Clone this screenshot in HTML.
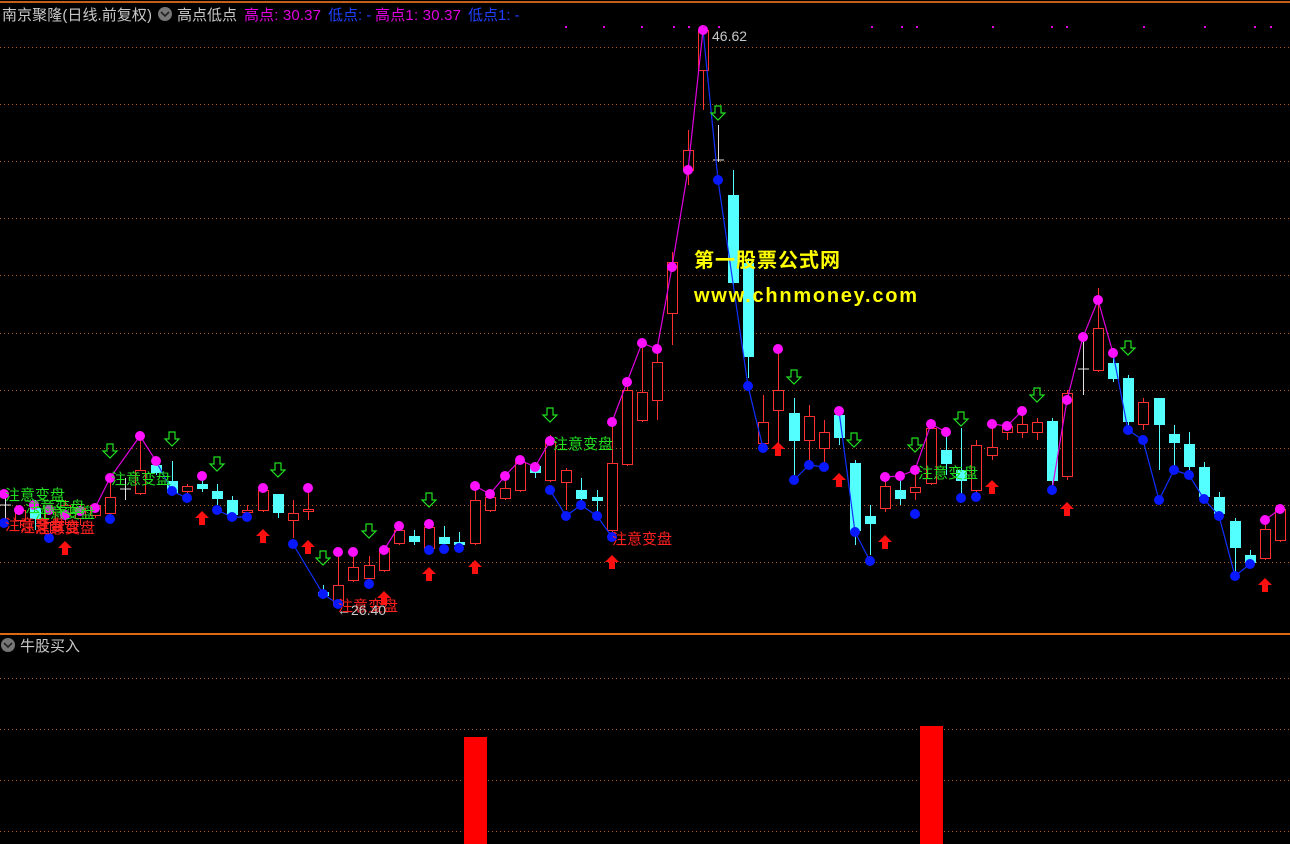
<!DOCTYPE html>
<html><head><meta charset="utf-8"><style>
html,body{margin:0;padding:0;background:#000;width:1290px;height:844px;overflow:hidden}
svg{display:block}
text{font-family:"Liberation Sans","Noto Sans CJK SC",sans-serif}
</style></head><body>
<svg id="s" width="1290" height="844" xmlns="http://www.w3.org/2000/svg">
<rect width="1290" height="844" fill="#000"/>
<line x1="0" y1="2" x2="1290" y2="2" stroke="#c0601c" stroke-width="2"/>
<g id="grid" stroke="#b85a10" stroke-width="1" stroke-dasharray="1,3"></g>
<line x1="0" y1="634" x2="1290" y2="634" stroke="#e06a10" stroke-width="2"/>
<text x="2" y="20" font-size="15" fill="#c8c8c8" textLength="150">南京聚隆(日线.前复权)</text>
<circle cx="165" cy="14" r="7" fill="#777"/><path d="M161 12 l4 4 l4 -4" stroke="#222" stroke-width="1.6" fill="none"/>
<text x="177" y="20" font-size="15" fill="#c8c8c8">高点低点</text>
<text x="244" y="20" font-size="15" fill="#e000e0" textLength="77">高点: 30.37</text>
<text x="328" y="20" font-size="15" fill="#2040ff">低点: -</text>
<text x="375" y="20" font-size="15" fill="#e000e0" textLength="86">高点1: 30.37</text>
<text x="468" y="20" font-size="15" fill="#2040ff">低点1: -</text>
<circle cx="8" cy="645" r="7" fill="#777"/><path d="M4 643 l4 4 l4 -4" stroke="#222" stroke-width="1.6" fill="none"/>
<text x="20" y="651" font-size="15" fill="#c8c8c8">牛股买入</text>
<rect x="464" y="737" width="23" height="107" fill="#ff0000"/>
<rect x="920" y="726" width="23" height="118" fill="#ff0000"/>
<g id="c"></g>
<text x="694" y="267" font-size="20" font-weight="bold" fill="#ffff00" textLength="146">第一股票公式网</text>
<text x="694" y="302" font-size="20" font-weight="bold" fill="#ffff00" textLength="223">www.chnmoney.com</text>
<text x="712" y="41" font-size="14" fill="#c8c8c8">46.62</text>
<text x="337" y="615" font-size="14" fill="#c8c8c8">←26.40</text>
</svg>
<script>
var NS="http://www.w3.org/2000/svg",g=document.getElementById('c'),gr=document.getElementById('grid');
function el(t,a,p){var e=document.createElementNS(NS,t);for(var k in a)e.setAttribute(k,a[k]);(p||g).appendChild(e);return e;}
[47,104,161,218,275,333,390,448,505,562,678,729,780,831].forEach(function(y){el('line',{x1:0,y1:y+.5,x2:1290,y2:y+.5},gr);});
var C=[[110,497,513,478,515,'r'],[125,489,491,478,500,'w'],[140,470,493,437,495,'r'],[156,465,472,458,475,'c'],[172,481,492,461,495,'c'],[187,486,491,484,495,'r'],[202,484,488,476,492,'c'],[217,491,498,484,505,'c'],[232,500,514,496,516,'c'],[247,510,512,505,516,'r'],[263,490,510,488,512,'r'],[278,494,512,494,518,'c'],[293,513,520,500,538,'r'],[308,509,511,490,520,'r'],[323,592,595,585,598,'c'],[338,585,605,552,608,'r'],[353,567,580,552,582,'r'],[369,565,578,556,585,'r'],[384,548,570,546,572,'r'],[399,530,543,526,545,'r'],[414,536,541,530,545,'c'],[429,527,548,524,550,'r'],[444,537,543,526,548,'c'],[459,542,544,532,548,'c'],[475,500,543,486,545,'r'],[490,497,510,492,512,'r'],[505,488,498,476,500,'r'],[520,462,490,458,492,'r'],[535,466,472,462,478,'c'],[550,441,480,435,482,'r'],[566,470,482,468,510,'r'],[581,490,498,478,505,'c'],[597,497,500,490,515,'c'],[612,463,530,422,532,'r'],[627,390,464,380,466,'r'],[642,392,420,343,422,'r'],[657,362,400,349,420,'r'],[672,262,313,252,345,'r'],[688,150,170,130,185,'r'],[703,30,70,28,110,'r'],[718,160,162,125,162,'w'],[733,195,282,170,285,'c'],[748,263,356,258,378,'c'],[763,422,443,395,448,'r'],[778,390,410,352,445,'r'],[794,413,440,398,475,'c'],[809,416,440,405,465,'r'],[824,432,448,420,467,'r'],[839,415,437,408,445,'c'],[855,463,530,460,545,'c'],[870,516,523,505,555,'c'],[885,486,508,478,512,'r'],[900,490,498,476,505,'c'],[915,487,492,470,500,'r'],[931,428,483,424,485,'r'],[946,450,463,432,475,'c'],[961,470,480,428,495,'c'],[976,445,490,440,495,'r'],[992,447,455,424,460,'r'],[1007,426,432,422,440,'r'],[1022,424,432,411,438,'r'],[1037,422,432,418,440,'r'],[1052,421,480,418,485,'c'],[1067,393,476,390,480,'r'],[1083,369,371,337,395,'w'],[1098,328,370,288,372,'r'],[1113,363,378,348,382,'c'],[1128,378,421,375,428,'c'],[1143,402,424,398,430,'r'],[1159,398,424,398,470,'c'],[1174,434,442,425,468,'c'],[1189,444,466,432,472,'c'],[1204,467,496,462,500,'c'],[1219,497,513,492,516,'c'],[1235,521,547,518,575,'c'],[1250,555,562,550,565,'c'],[1265,529,558,520,560,'r'],[1280,509,540,505,542,'r'],
[5,505,520,495,525,'w'],[20,510,520,505,528,'r'],[35,508,518,500,530,'c'],[50,512,522,505,535,'r'],[65,505,515,500,525,'r'],[80,508,518,505,525,'r'],[95,505,515,505,518,'r']];
C.forEach(function(c){var col=c[5]=='r'?'#ff3030':c[5]=='c'?'#54ffff':'#e0e0e0';
el('line',{x1:c[0]+.5,y1:c[3],x2:c[0]+.5,y2:c[4],stroke:col});
var h=Math.max(c[2]-c[1],1);
if(c[5]=='r')el('rect',{x:c[0]-4.5,y:c[1]+.5,width:10,height:h,fill:'#000',stroke:col});
else if(c[5]=='c')el('rect',{x:c[0]-5,y:c[1],width:11,height:h+1,fill:col});
else el('line',{x1:c[0]-5,y1:c[1],x2:c[0]+6,y2:c[1],stroke:col});});
function line(pts,col){el('polyline',{points:pts.map(function(p){return p.join(',')}).join(' '),fill:'none',stroke:col,'stroke-width':1.2});}
var P=[[4,494],[19,510],[34,505],[49,510],[65,515],[80,511],[95,508],[110,478],[140,436],[156,461],[202,476],[263,488],[308,488],[338,552],[353,552],[384,550],[399,526],[429,524],[475,486],[490,494],[505,476],[520,460],[535,467],[550,441],[612,422],[627,382],[642,343],[657,349],[672,267],[688,170],[703,30],[778,349],[839,411],[885,477],[900,476],[915,470],[931,424],[946,432],[992,424],[1007,426],[1022,411],[1067,400],[1083,337],[1098,300],[1113,353],[1265,520],[1280,509]];
var B=[[4,523],[49,538],[110,519],[172,491],[187,498],[217,510],[232,517],[247,517],[293,544],[323,594],[338,604],[369,584],[429,550],[444,549],[459,548],[550,490],[566,516],[581,505],[597,516],[612,537],[718,180],[748,386],[763,448],[794,480],[809,465],[824,467],[855,532],[870,561],[915,514],[961,498],[976,497],[1052,490],[1128,430],[1143,440],[1159,500],[1174,470],[1189,475],[1204,499],[1219,516],[1235,576],[1250,564]];
line([[95,508],[110,478],[140,436],[156,461]],'#e000e0');
line([[384,550],[399,526]],'#e000e0');
line([[475,486],[490,494],[505,476],[520,460],[535,467],[550,441]],'#e000e0');
line([[612,422],[627,382],[642,343],[657,349],[672,267],[688,170],[703,30]],'#e000e0');
line([[885,477],[900,476],[915,470],[931,424],[946,432]],'#e000e0');
line([[992,424],[1007,426],[1022,411]],'#e000e0');
line([[1052,490],[1067,400],[1083,337],[1098,300],[1113,353]],'#e000e0');
line([[1265,520],[1280,509]],'#e000e0');
line([[156,461],[172,491],[187,498]],'#1030ff');
line([[217,510],[232,517],[247,517]],'#1030ff');
line([[293,544],[323,594],[338,604]],'#1030ff');
line([[550,490],[566,516],[581,505],[597,516],[612,537]],'#1030ff');
line([[703,30],[718,180],[748,386],[763,448]],'#1030ff');
line([[794,480],[809,465],[824,467]],'#1030ff');
line([[839,411],[855,532],[870,561]],'#1030ff');
line([[1113,353],[1128,430],[1143,440],[1159,500],[1174,470],[1189,475],[1204,499],[1219,516],[1235,576],[1250,564]],'#1030ff');
P.forEach(function(p){el('circle',{cx:p[0],cy:p[1],r:5,fill:'#ff10ff'});});
B.forEach(function(p){el('circle',{cx:p[0],cy:p[1],r:5,fill:'#0818ff'});});
[[110,451],[172,439],[217,464],[278,470],[323,558],[369,531],[429,500],[550,415],[718,113],[794,377],[854,440],[915,445],[961,419],[1037,395],[1128,348]].forEach(function(a){var x=a[0],y=a[1];
el('path',{d:'M'+(x-3)+' '+(y-7)+'h6v7h4l-7 7l-7 -7h4z',fill:'none',stroke:'#20e020','stroke-width':1.2});});
[[65,548],[202,518],[263,536],[308,547],[384,598],[429,574],[475,567],[612,562],[778,449],[839,480],[885,542],[992,487],[1067,509],[1265,585]].forEach(function(a){var x=a[0],y=a[1];
el('path',{d:'M'+x+' '+(y-7)+'l7 7h-4v7h-6v-7h-4z',fill:'#ff1010'});});
function t(x,y,s,col){var e=el('text',{x:x,y:y,'font-size':15,fill:col});e.textContent=s;}
t(5,500,'注意变盘','#20e020');t(25,512,'注意变盘','#20e020');t(35,518,'注意变盘','#20e020');
t(5,530,'注意变盘','#ff2020');t(20,532,'注意变盘','#ff2020');t(35,533,'注意变盘','#ff2020');
t(111,484,'注意变盘','#20e020');t(553,449,'注意变盘','#20e020');t(918,478,'注意变盘','#20e020');
t(612,544,'注意变盘','#ff2020');t(338,611,'注意变盘','#ff2020');
[565,603,641,673,688,703,718,871,901,916,992,1051,1066,1143,1204,1254,1270].forEach(function(x){el('rect',{x:x,y:26,width:2,height:2,fill:'#e000e0'});});
</script>
</body></html>
